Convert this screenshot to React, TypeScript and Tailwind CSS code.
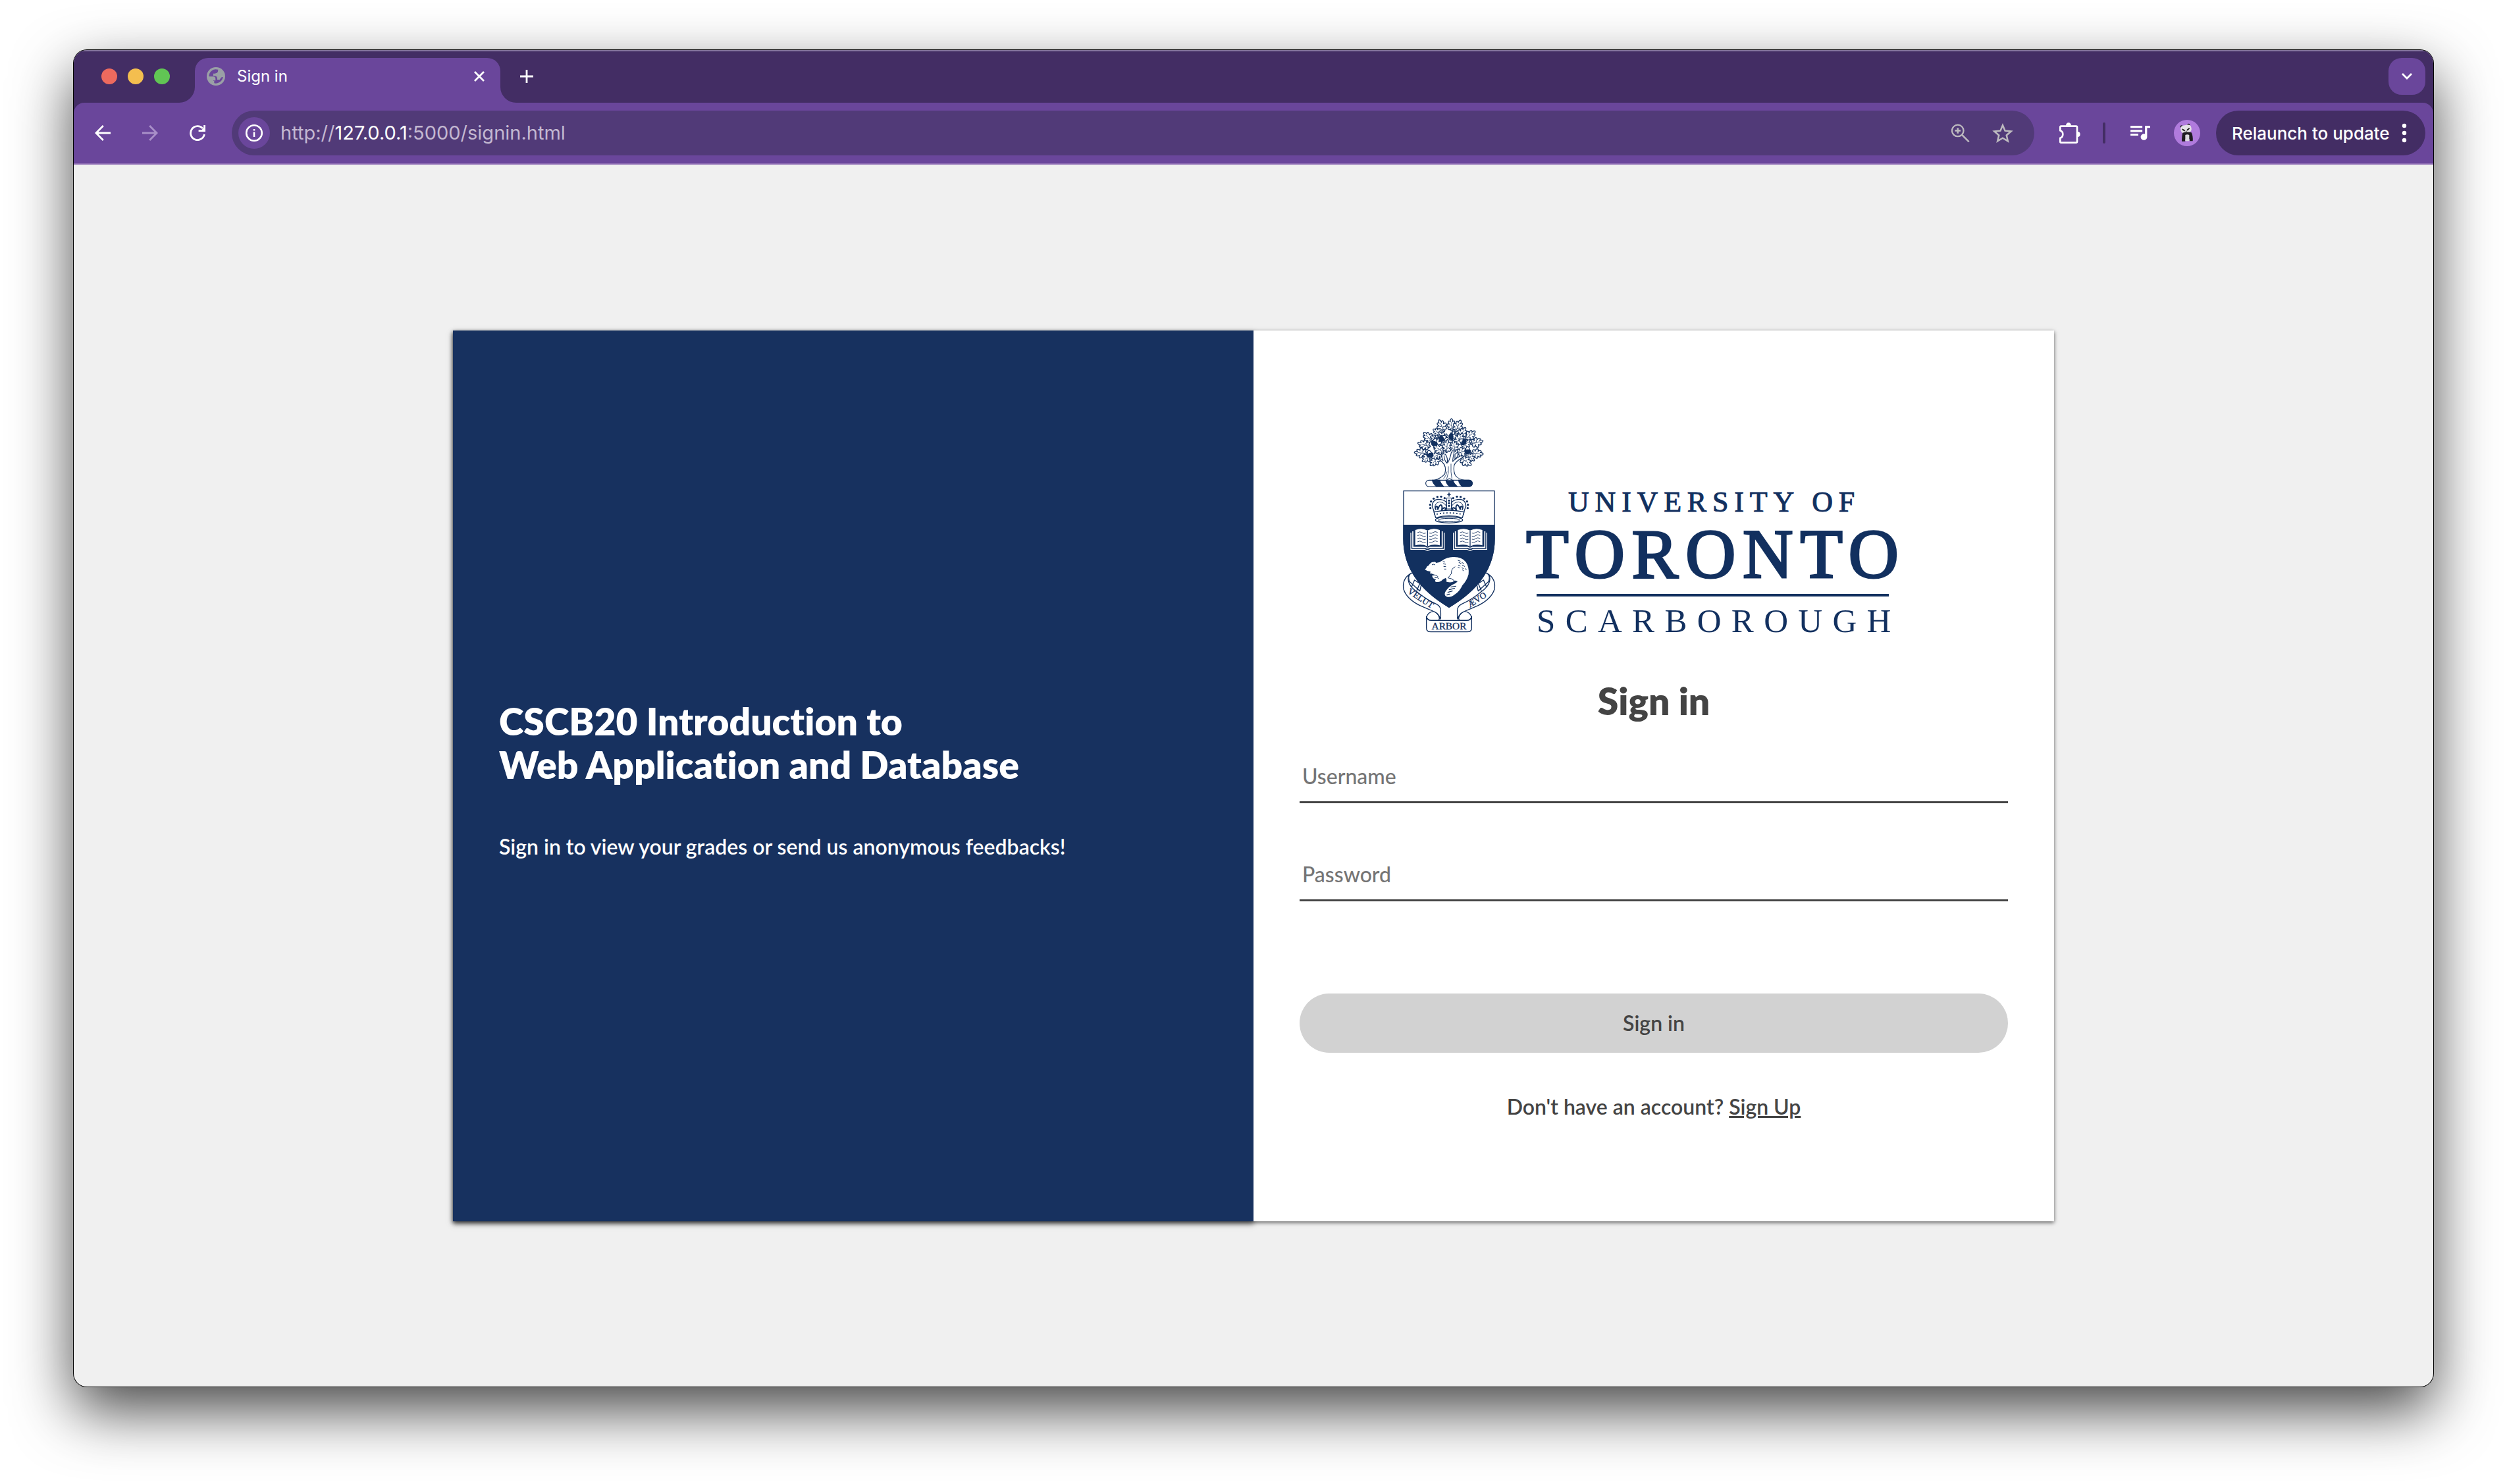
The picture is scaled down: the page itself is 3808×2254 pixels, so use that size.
import { useState } from "react";

const NAVY = "#12305f";

/* ---------- Browser chrome icons ---------- */

function GlobeIcon() {
  return (
    <svg viewBox="582 66 84 84" className="size-7 shrink-0" aria-hidden="true">
      <circle cx="624" cy="108" r="42" fill="#9aa0a6" />
      <path d="M592 105A32 32 0 0 1 622 76L634 77V86Q633 95 622 95H612V106H596Z" fill="#6a469b" />
      <path d="M596 106H618Q629 107 630 117V123H641Q645 116 651 111H656A33 33 0 0 1 616 139V129H608Q603 128 603 120Q596 116 592 106Z" fill="#6a469b" />
      <path d="M594 109H612Q622 110 622 119V127H612V141Q594 132 592 110Z" fill="#9aa0a6" />
      <path d="M634 80Q652 88 656 106L646 112Q636 112 634 103L622 100V94Q634 92 634 80Z" fill="#9aa0a6" />
    </svg>
  );
}

function BackIcon({ className }: { className?: string }) {
  return (
    <svg viewBox="0 0 24 24" className={className} fill="none" stroke="currentColor" strokeWidth="2.8" aria-hidden="true">
      <path d="M24 12H2.5M12.8 1L1.9 12l10.9 11" />
    </svg>
  );
}

function ReloadIcon() {
  return (
    <svg viewBox="0 0 24 24" className="size-6" fill="none" stroke="currentColor" strokeWidth="2.8" aria-hidden="true">
      <path d="M20 5.2A10.5 10.5 0 1 0 22.4 14" />
      <path d="M22.6 0V8.6H13.6" />
      <path d="M17 8.6L22.6 3V8.6Z" fill="currentColor" stroke="none" />
    </svg>
  );
}

function InfoIcon() {
  return (
    <svg viewBox="0 0 28 28" className="size-7" fill="none" stroke="currentColor" strokeWidth="2.6" aria-hidden="true">
      <circle cx="14" cy="14" r="11.8" />
      <path d="M14 12.6V20M14 8V10.6" />
    </svg>
  );
}

function ZoomIcon() {
  return (
    <svg viewBox="71 67 86 86" className="size-7" fill="none" stroke="currentColor" aria-hidden="true">
      <circle cx="101" cy="99" r="27" strokeWidth="7" />
      <path d="M120 118L153 151" strokeWidth="8" />
      <path d="M88 99H114M101 86V112" strokeWidth="8" />
    </svg>
  );
}

function StarIcon() {
  return (
    <svg viewBox="2 2 20 19" className="h-[30px] w-8" fill="currentColor" aria-hidden="true">
      <path d="M22 9.24l-7.19-.62L12 2 9.19 8.63 2 9.24l5.46 4.73L5.82 21 12 17.27 18.18 21l-1.63-7.03L22 9.24zM12 15.4l-3.76 2.27 1-4.28-3.32-2.88 4.38-.38L12 6.1l1.71 4.04 4.38.38-3.32 2.88 1 4.28L12 15.4z" />
    </svg>
  );
}

function PuzzleIcon() {
  return (
    <svg viewBox="564 57 96 96" className="size-8" fill="none" stroke="currentColor" aria-hidden="true">
      <path d="M572 74H640Q645 74 645 79V144Q645 149 640 149H572Q568 149 568 145V128Q580 124 580 111Q580 98 568 94V78Q568 74 572 74Z" strokeWidth="8" />
      <path d="M594 71a12 13 0 0 1 24 0zM647 99a12 12 0 0 1 0 24z" fill="currentColor" stroke="none" />
    </svg>
  );
}

function QueueMusicIcon() {
  return (
    <svg viewBox="3 6 19 14" className="h-[22px] w-[30px]" fill="currentColor" aria-hidden="true">
      <path d="M14.5 6H3v2h11.5V6zm0 4H3v2h11.5v-2zM3 15.6h7.6v-2H3v2zM17 6v7.9c-.31-.11-.65-.18-1-.18-1.7 0-3.1 1.4-3.1 3.1s1.4 3.1 3.1 3.1 3.1-1.4 3.1-3.1V8h3V6h-5z" />
    </svg>
  );
}

function PandaAvatar() {
  return (
    <svg viewBox="0 0 120 120" className="size-10" aria-hidden="true">
      <circle cx="60" cy="60" r="60" fill="#b07bdd" />
      <circle cx="35" cy="31" r="6" fill="#222" />
      <circle cx="67" cy="23" r="6" fill="#222" />
      <rect x="31" y="24" width="49" height="35" rx="14" fill="#e4e1e6" transform="rotate(-10 55 42)" />
      <path d="M40 44l8 5M69 40l-7 6" stroke="#222" strokeWidth="6" strokeLinecap="round" />
      <path d="M53 51q3 4 6 0" stroke="#222" strokeWidth="3" fill="none" />
      <path d="M40 59Q60 52 80 58Q88 74 86 97H72V88H52V98H36Q36 72 40 59Z" fill="#1f1c22" />
      <path d="M52 69Q61 64 70 69V97H52Z" fill="#dcdadf" />
    </svg>
  );
}

function TabFlare({ className }: { className: string }) {
  return (
    <svg viewBox="0 0 24 24" className={className} fill="#6a469b" aria-hidden="true">
      <path d="M24 0V24H0A24 24 0 0 0 24 0Z" />
    </svg>
  );
}

/* ---------- University crest and wordmark ---------- */

const LEAF =
  "M0 0Q-5 -2 -5 -8Q-14 -4 -16 -12Q-14 -17 -9 -18Q-20 -19 -20 -28Q-16 -32 -10 -30Q-16 -38 -11 -43Q-6 -43 -5 -39Q-6 -50 0 -52Q6 -50 5 -39Q6 -43 11 -43Q16 -38 10 -30Q16 -32 20 -28Q20 -19 9 -18Q14 -17 16 -12Q14 -4 5 -8Q5 -2 0 0Z";

// Each leaf: base x, base y, rotation, scale.
const LEAVES: [number, number, number, number][] = [
  [252, 104, -25, 1.15],
  [286, 102, -2, 1.1],
  [302, 106, 24, 1.15],
  [240, 118, -58, 0.9],
  [346, 140, 50, 1.15],
  [198, 152, -42, 1.15],
  [188, 172, -74, 1.15],
  [370, 160, 76, 1.15],
  [174, 204, -84, 1.15],
  [372, 202, 94, 1.1],
  [192, 208, -128, 1.0],
  [350, 206, 128, 0.95],
  [228, 218, -135, 1.1],
  [325, 222, 125, 1.15],
  [240, 200, -118, 1.0],
  [308, 206, 68, 1.1],
  [232, 148, -62, 0.95],
  [318, 134, 32, 1.1],
  [262, 154, -35, 1.15],
  [290, 152, 4, 1.0],
  [304, 162, 32, 1.15],
  [224, 186, -14, 1.15],
  [334, 180, 40, 1.0],
  [250, 200, -55, 1.1],
  [262, 200, 4, 1.15],
  [302, 194, -12, 1.0],
];

const ACORNS: [number, number, number][] = [
  [242, 134, 60],
  [206, 154, 20],
  [286, 126, 85],
  [338, 150, -60],
  [358, 192, 0],
  [186, 208, -20],
];

function Tree() {
  return (
    <g fill="#fff" stroke={NAVY} strokeWidth="3.4" strokeLinejoin="round">
      {LEAVES.map(([x, y, angle, size], i) => (
        <g key={i} transform={`translate(${x} ${y}) rotate(${angle}) scale(${size})`}>
          <path d={LEAF} />
          <path d="M0 0V-38M0 -10L-8 -13M0 -16L8 -22M0 -24L-9 -27" fill="none" strokeWidth="2" />
        </g>
      ))}
      <path d="M205 326Q236 318 254 296Q264 262 240 240L214 222Q232 224 246 236Q238 220 241 208L250 204Q252 226 268 244Q278 226 284 196L297 196Q290 222 290 240Q304 224 330 212L334 222Q302 240 296 258Q292 290 304 306Q316 320 344 326Z" />
      <path d="M255 205Q270 224 264 248Q252 236 250 214M300 208Q306 198 314 200Q314 220 300 230Z" />
      <path d="M262 320Q274 290 270 262M286 318Q280 290 282 250M248 318Q262 302 264 286" fill="none" strokeWidth="2.4" />
      {ACORNS.map(([x, y, angle], i) => (
        <g key={i} transform={`translate(${x} ${y}) rotate(${angle})`}>
          <path d="M-10 -2Q-9 -17 0 -20Q9 -17 10 -2Z" />
          <path d="M-14 -2Q0 -9 14 -2Q14 13 0 13Q-14 13 -14 -2Z" fill={NAVY} />
        </g>
      ))}
      <rect x="167" y="325" width="212" height="29" rx="14" />
      <path d="M196 325H230Q236 342 248 354H216Q202 344 196 325ZM258 325H290Q296 342 310 354H276Q262 344 258 325ZM316 325H366Q379 327 379 340Q379 352 366 354H334Q320 344 316 325Z" fill={NAVY} />
      <path d="M264 325Q275 312 286 325" />
    </g>
  );
}

const CROWN_PEARLS: [number, number][] = [
  [188, 122], [187, 107], [191, 92], [203, 79], [220, 71], [237, 70], [253, 77],
  [358, 122], [359, 107], [355, 92], [342, 79], [326, 71], [309, 70], [292, 77],
  [273, 88], [273, 100], [273, 112],
];

function Crown() {
  return (
    <g fill="none" stroke={NAVY} strokeWidth="4" strokeLinejoin="round">
      <path d="M273 52V70M265 60H281" strokeWidth="5" />
      <path d="M207 152Q204 130 196 114Q196 86 222 82Q248 82 262 96V130M339 152Q342 130 350 114Q350 86 324 82Q298 82 284 96V130" />
      <path d="M208 118Q212 96 230 94Q250 96 260 112M338 118Q334 96 316 94Q296 96 286 112" strokeWidth="3" />
      <path d="M214 130Q206 118 216 114Q224 118 222 128Q230 106 236 108Q244 112 240 130Q250 116 258 124L254 134M332 130Q340 118 330 114Q322 118 324 128Q316 106 310 108Q302 112 306 130Q296 116 288 124L292 134" strokeWidth="6" />
      <path d="M262 76H284V126H262Z" strokeWidth="3" />
      <path d="M205 140Q273 124 341 140L334 166Q273 148 212 166Z" fill="#fff" />
      <path d="M216 150Q273 138 330 150" strokeWidth="5" strokeDasharray="6 9" />
      <ellipse cx="273" cy="176" rx="62" ry="14" fill="#fff" />
      <ellipse cx="273" cy="177" rx="50" ry="8" strokeWidth="3" />
      {CROWN_PEARLS.map(([x, y], i) => (
        <circle key={i} cx={x} cy={y} r="5" fill={NAVY} stroke="none" />
      ))}
    </g>
  );
}

function Book() {
  return (
    <g>
      <path d="M0 16V92H62Q76 102 90 92H152V16" fill="none" stroke="#fff" strokeWidth="4" />
      <path d="M9 10V83H66Q76 90 86 83H143V10" fill="none" stroke="#fff" strokeWidth="5" />
      <path d="M20 4Q50 -8 76 6Q102 -8 132 4V74Q102 66 76 78Q50 66 20 74Z" fill="#fff" />
      <path d="M76 6V76" stroke={NAVY} strokeWidth="4" />
      {[16, 30, 44, 58].map((y) => (
        <path key={y} d={`M30 ${y}q12 -7 20 0t18 2M84 ${y + 2}q10 4 18 -3t20 0`} fill="none" stroke={NAVY} strokeWidth="2.6" />
      ))}
    </g>
  );
}

function Beaver() {
  return (
    <g>
      <path
        d="M163 402Q170 396 173 388Q182 384 186 376Q194 366 204 368Q210 364 214 372Q232 370 244 360Q262 346 292 345Q332 344 350 368Q366 392 362 424Q354 454 334 474Q322 500 302 514Q280 532 262 526Q248 520 256 504Q268 484 288 472Q306 464 312 456L300 452Q288 462 272 460Q256 460 262 450L258 440Q244 446 238 454Q228 462 212 458Q206 452 214 448Q196 444 196 430L208 426L192 420Q186 426 188 410Q176 412 163 402Z"
        fill="#fff"
      />
      <g fill="none" stroke={NAVY} strokeWidth="3" strokeLinecap="round">
        <path d="M300 390Q282 398 284 420Q276 432 268 440Q286 442 296 452M200 428Q216 424 222 434M196 380q6 -4 12 0M208 440q10 -4 18 2" />
        <path d="M246 366l8 2M247 376l10 2M249 388l9 1M252 400l7 0M314 360l10 4M318 370l10 5M316 382l8 4M314 392l6 3M332 370l8 5M334 382l10 6M332 394l6 4M346 398l6 4M334 404l5 3" />
        <path d="M282 482l22 -4M274 494l24 -6M268 506l20 -6M264 518l12 -4" strokeWidth="4" />
      </g>
    </g>
  );
}

function Ribbon() {
  return (
    <g fill="#fff" stroke={NAVY} strokeWidth="4" strokeLinejoin="round">
      <path d="M98 420Q84 430 92 456L140 500L150 456L116 416Z" />
      <path d="M448 420Q462 430 454 456L406 500L396 456L430 416Z" />
      <path d="M102 482L116 450L140 466L126 498M444 482L430 450L406 466L420 498" fill="none" />
      <path d="M204 592Q174 596 170 622L184 634H226Q238 612 204 592ZM342 592Q372 596 376 622L362 634H320Q308 612 342 592Z" />
      <path d="M96 422Q58 446 66 492Q80 536 140 566Q176 582 206 594Q228 604 234 628Q236 618 235 590Q236 570 216 560Q168 538 130 506Q92 480 88 454Q84 434 96 422Z" />
      <path d="M450 422Q488 446 480 492Q466 536 406 566Q370 582 340 594Q318 604 312 628Q310 618 311 590Q310 570 330 560Q378 538 416 506Q454 480 458 454Q462 434 450 422Z" />
      <path d="M170 616Q172 634 192 634H354Q374 634 376 616V668Q376 686 356 686H190Q170 686 170 668Z" />
    </g>
  );
}

function UniversityLogo() {
  return (
    <svg
      viewBox="2132 632 760 336"
      className="h-[336px] w-[760px] max-w-full overflow-visible font-normal"
      role="img"
      aria-label="University of Toronto Scarborough"
    >
      <g transform="translate(2110 620) scale(0.33333)">
        <Tree />
      </g>
      <g transform="translate(2110 730) scale(0.33333)">
        <Ribbon />
        <path d="M66 44H480V262C480 400 400 500 273 574C146 500 66 400 66 262Z" fill="#fff" stroke={NAVY} strokeWidth="4" />
        <path d="M64 198H482V262C482 400 400 500 273 576C146 500 64 400 64 262Z" fill={NAVY} />
        <Crown />
        <g transform="translate(99 218)">
          <Book />
        </g>
        <g transform="translate(293 218)">
          <Book />
        </g>
        <Beaver />
        <g fill={NAVY} fontFamily="Liberation Serif, serif" fontSize="40" stroke={NAVY} strokeWidth="1">
          <text x="82" y="508" transform="rotate(33 82 508)">VELUT</text>
          <text x="368" y="576" transform="rotate(-33 368 576)">ÆVO</text>
          <text x="273" y="675" textAnchor="middle" fontSize="46">ARBOR</text>
        </g>
      </g>
      <g fill={NAVY} stroke={NAVY} fontFamily="Liberation Serif, serif">
        <text x="2382" y="776" fontSize="44" strokeWidth="1" className="tracking-[0.2em]">UNIVERSITY OF</text>
        <text x="2318" y="876" fontSize="106" strokeWidth="3" className="tracking-widest">TORONTO</text>
        <text x="2334" y="959" fontSize="51" strokeWidth="0" className="tracking-[0.3em]">SCARBOROUGH</text>
      </g>
      <rect x="2334" y="901" width="535" height="4" fill={NAVY} />
    </svg>
  );
}

/* ---------- Page ---------- */

function TabStrip() {
  return (
    <div className="flex h-20 items-start bg-[#432d64] pt-3 pr-3 shadow-[inset_0_2px_0_#7f7097]">
      <div className="mr-[38px] ml-[42px] flex h-14 items-center gap-4">
        <button type="button" aria-label="Close window" className="size-6 rounded-full bg-[#ed6a5e]" />
        <button type="button" aria-label="Minimise window" className="size-6 rounded-full bg-[#f4be4f]" />
        <button type="button" aria-label="Zoom window" className="size-6 rounded-full bg-[#61c554]" />
      </div>
      <div className="relative flex h-[68px] w-[464px] items-center rounded-t-[20px] bg-[#6a469b] pr-6 pb-3 pl-[18px]">
        <TabFlare className="absolute right-full bottom-0 size-6" />
        <TabFlare className="absolute bottom-0 left-full size-6 -scale-x-100" />
        <GlobeIcon />
        <span className="ml-[18px] flex-1 text-2xl text-white">Sign in</span>
        <button type="button" aria-label="Close tab" className="text-white">
          <svg viewBox="0 0 16 16" className="size-4" stroke="currentColor" strokeWidth="2.8" aria-hidden="true">
            <path d="M1 1L15 15M15 1L1 15" />
          </svg>
        </button>
      </div>
      <button type="button" aria-label="New tab" className="ml-[30px] flex h-14 items-center text-white">
        <svg viewBox="0 0 20 20" className="size-5" stroke="currentColor" strokeWidth="2.8" aria-hidden="true">
          <path d="M10 0V20M0 10H20" />
        </svg>
      </button>
      <button type="button" aria-label="Search tabs" className="ml-auto flex size-14 items-center justify-center rounded-[20px] bg-[#6a469b] text-white">
        <svg viewBox="0 0 16 10" className="h-2.5 w-4" fill="none" stroke="currentColor" strokeWidth="2.8" aria-hidden="true">
          <path d="M1 1L8 8L15 1" />
        </svg>
      </button>
    </div>
  );
}

function Toolbar() {
  return (
    <div className="bg-[#432d64]">
      <div className="flex items-center rounded-t-2xl border-b-2 border-[#8d6bb3] bg-[#6a469b] py-3 pr-3 pl-8 text-white">
        <div className="flex items-center gap-12">
          <button type="button" aria-label="Back"><BackIcon className="size-6" /></button>
          <button type="button" aria-label="Forward" className="text-[#a88fc8]"><BackIcon className="size-6 rotate-180" /></button>
          <button type="button" aria-label="Reload"><ReloadIcon /></button>
        </div>
        <div className="mr-[38px] ml-10 flex h-[68px] flex-1 items-center rounded-full bg-[#513a78] pr-8 pl-2.5">
          <button type="button" aria-label="View site information" className="flex size-12 items-center justify-center rounded-full bg-[#6a469b]">
            <InfoIcon />
          </button>
          <p className="ml-4 flex-1 text-[29px] text-[#c3b8d1]">
            http://<span className="text-white">127.0.0.1</span>:5000/signin.html
          </p>
          <div className="flex items-center gap-[34px] text-[#bdbabf]">
            <button type="button" aria-label="Zoom"><ZoomIcon /></button>
            <button type="button" aria-label="Bookmark this page"><StarIcon /></button>
          </div>
        </div>
        <button type="button" aria-label="Extensions"><PuzzleIcon /></button>
        <div className="mr-[38px] ml-[34px] h-8 w-1 rounded-full bg-[#432d64]" />
        <button type="button" aria-label="Media controls"><QueueMusicIcon /></button>
        <button type="button" aria-label="Profile" className="mr-6 ml-9"><PandaAvatar /></button>
        <button type="button" className="flex h-[68px] w-[318px] items-center justify-between rounded-full bg-[#432d64] pr-7 pl-6 text-[26px] font-medium">
          Relaunch to update
          <svg viewBox="0 0 8 30" className="h-[30px] w-2" fill="currentColor" aria-hidden="true">
            <circle cx="4" cy="4" r="3.2" />
            <circle cx="4" cy="15" r="3.2" />
            <circle cx="4" cy="26" r="3.2" />
          </svg>
        </button>
      </div>
    </div>
  );
}

type FieldProps = {
  id: string;
  label: string;
  type: string;
  value: string;
  onChange: (value: string) => void;
};

function Field({ id, label, type, value, onChange }: FieldProps) {
  return (
    <input
      id={id}
      type={type}
      aria-label={label}
      placeholder={label}
      value={value}
      onChange={(e) => onChange(e.target.value)}
      className="block h-[61px] w-full border-b-[3px] border-[#444] bg-transparent pb-[18px] pl-1 text-[32px] text-[#444] outline-none placeholder:text-[#757575]"
    />
  );
}

export default function App() {
  const [username, setUsername] = useState("");
  const [password, setPassword] = useState("");

  return (
    <div className="min-h-screen bg-white px-28 pt-[76px] pb-[148px]">
      <div className="flex min-h-[calc(100vh-224px)] flex-col overflow-hidden rounded-[20px] bg-[#f0f0f0] shadow-[0_0_0_1px_#000,0_36px_90px_rgba(0,0,0,0.72)]">
        <header className="font-['Inter',sans-serif]">
          <TabStrip />
          <Toolbar />
        </header>
        <main className="flex flex-1 items-center justify-center font-['Lato',sans-serif] text-[32px] leading-10 font-semibold [font-variant-ligatures:none]">
          <div className="grid w-full max-w-[2432px] grid-cols-2 shadow-[0_2px_6px_rgba(0,0,0,0.6)]">
            <section className="flex flex-col justify-center gap-[72px] bg-[#17315f] px-[70px] pt-3 text-white shadow-[0_4px_8px_rgba(0,0,0,0.5)]">
              <h1 className="text-[57px] leading-[66px] font-extrabold">
                CSCB20 Introduction to
                <br />
                Web Application and Database
              </h1>
              <p>Sign in to view your grades or send us anonymous feedbacks!</p>
            </section>
            <section className="relative flex flex-col items-center bg-white px-[70px] pt-[131px] pb-[154px] text-[#444]">
              <UniversityLogo />
              <h2 className="mt-[62px] text-[57px] leading-[66px] font-extrabold">Sign in</h2>
              <form className="mt-[62px] w-full" onSubmit={(e) => e.preventDefault()}>
                <div className="flex flex-col gap-[88px] font-medium">
                  <Field id="username" label="Username" type="text" value={username} onChange={setUsername} />
                  <Field id="password" label="Password" type="password" value={password} onChange={setPassword} />
                </div>
                <button type="submit" className="mt-[140px] block h-[90px] w-full rounded-full bg-[#d2d2d2]">
                  Sign in
                </button>
              </form>
              <p className="mt-[62px]">
                Don't have an account?{" "}
                <a href="#signup" className="underline">Sign Up</a>
              </p>
            </section>
          </div>
        </main>
      </div>
    </div>
  );
}
